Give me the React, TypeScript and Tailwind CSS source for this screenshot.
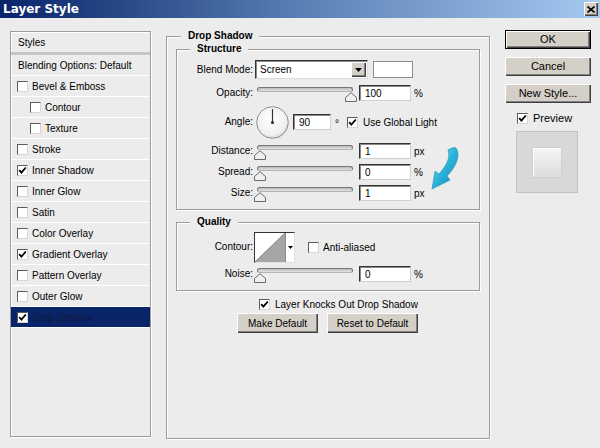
import React from "react";

const FONT = "font-['Liberation_Sans',Arial,sans-serif]";

function CheckBox({ checked }: { checked?: boolean }) {
  return (
    <span className="flex h-[11px] w-[11px] shrink-0 items-center justify-center border border-[#5a5a5a] border-r-[#d6d6d6] border-b-[#d6d6d6] bg-white">
      {checked ? (
        <svg width="9" height="9" viewBox="0 0 9 9">
          <path d="M1.2 4.2 L3.4 6.7 L7.8 1.5" fill="none" stroke="#000" strokeWidth="1.8" />
        </svg>
      ) : null}
    </span>
  );
}

function WinButton({
  children,
  isDefault,
  className = "",
}: {
  children: React.ReactNode;
  isDefault?: boolean;
  className?: string;
}) {
  return (
    <button
      type="button"
      className={`flex items-center justify-center bg-[#d4d0c8] text-black shadow-[inset_1px_1px_0_#ffffff,inset_-1px_-1px_0_#404040,inset_-2px_-2px_0_#808080] ${
        isDefault ? "border border-black" : ""
      } ${className}`}
    >
      {children}
    </button>
  );
}

function Slider({ thumb }: { thumb: number }) {
  return (
    <div className="relative h-[16px] w-[98px] shrink-0">
      <div className="ml-[1px] mt-[4px] h-[5px] w-[96px] rounded-full border border-[#777777] border-b-[#b4b4b4] bg-gradient-to-b from-[#b9b9b9] to-[#e4e4e4]" />
      <svg
        className="absolute top-[5px]"
        style={{ left: thumb - 6 }}
        width="12"
        height="10"
        viewBox="0 0 12 10"
      >
        <path d="M0.5 9.5 V5.5 L6 0.7 L11.5 5.5 V9.5 Z" fill="#efefef" stroke="#6a6a6a" />
      </svg>
    </div>
  );
}

function Field({ value, className = "" }: { value: string; className?: string }) {
  return (
    <div
      className={`flex h-[16px] shrink-0 items-center border border-[#333333] border-r-[#d0d0d0] border-b-[#d0d0d0] bg-white pl-[5px] text-[10px] text-black shadow-[inset_1px_1px_0_#8a8a8a] ${className}`}
    >
      {value}
    </div>
  );
}

function Label({ children }: { children: React.ReactNode }) {
  return <div className="w-[76px] shrink-0 text-right text-[10px] leading-[12px] text-black">{children}</div>;
}

function SliderRow({
  label,
  thumb,
  value,
  unit,
  className = "",
}: {
  label: string;
  thumb: number;
  value: string;
  unit: string;
  className?: string;
}) {
  return (
    <div className={`flex h-[16px] items-center ${className}`}>
      <Label>{label}</Label>
      <div className="ml-[3px]">
        <Slider thumb={thumb} />
      </div>
      <Field value={value} className="ml-[5px] w-[52px]" />
      <span className="ml-[3px] text-[10px] text-black">{unit}</span>
    </div>
  );
}

const styleItems: { label: string; checked?: boolean; indent?: boolean; active?: boolean }[] = [
  { label: "Bevel & Emboss" },
  { label: "Contour", indent: true },
  { label: "Texture", indent: true },
  { label: "Stroke" },
  { label: "Inner Shadow", checked: true },
  { label: "Inner Glow" },
  { label: "Satin" },
  { label: "Color Overlay" },
  { label: "Gradient Overlay", checked: true },
  { label: "Pattern Overlay" },
  { label: "Outer Glow" },
  { label: "Drop Shadow", checked: true, active: true },
];

export default function App() {
  return (
    <div className={`relative flex h-[448px] w-[600px] flex-col overflow-hidden bg-[#ececec] ${FONT}`}>
      {/* Title bar */}
      <div className="flex h-[18px] shrink-0 items-center justify-between bg-gradient-to-r from-[#0a246a] via-[#5a7fb4] to-[#a6caf0] pl-[3px]">
        <span className="font-['DejaVu_Sans',sans-serif] text-[12px] font-bold leading-[14px] text-white">Layer Style</span>
        <div className="mr-[2px] flex h-[14px] w-[14px] items-center justify-center bg-[#d4d0c8] shadow-[inset_1px_1px_0_#ffffff,inset_-1px_-1px_0_#404040,inset_-2px_-2px_0_#808080]">
          <svg width="8" height="7" viewBox="0 0 8 7">
            <path d="M0.5 0.5 L7.5 6.5 M7.5 0.5 L0.5 6.5" stroke="#000" strokeWidth="1.6" />
          </svg>
        </div>
      </div>

      {/* Body */}
      <div className="flex items-start pt-[12px]">
        {/* Left styles list */}
        <div className="ml-[10px] mt-[1px] flex h-[406px] w-[141px] shrink-0 flex-col border border-[#9c9c9c] shadow-[inset_1px_1px_0_#ffffff,1px_1px_0_#ffffff]">
          <div className="flex h-[20px] items-center pl-[7px] text-[10px] text-black">Styles</div>
          <div className="h-[3px] bg-[#c6c6c6]" />
          <div className="flex h-[21px] items-center border-b border-white pl-[7px] text-[10px] text-black">
            Blending Options: Default
          </div>
          {styleItems.map((it) => (
            <div
              key={it.label}
              className={`flex h-[21px] items-center gap-[4px] border-b border-white text-[10px] ${
                it.indent ? "pl-[19px]" : "pl-[6px]"
              } ${it.active ? "bg-[#0a246a] text-[#101a3c]" : "text-black"}`}
            >
              <CheckBox checked={it.checked} />
              <span>{it.label}</span>
            </div>
          ))}
        </div>

        {/* Middle: Drop Shadow */}
        <fieldset className="ml-[15px] h-[409px] w-[324px] shrink-0 border border-[#9c9c9c] shadow-[inset_1px_1px_0_#ffffff,1px_1px_0_#ffffff]">
          <legend className="ml-[14px] bg-[#ececec] px-[7px] text-[10px] font-bold leading-[12px] text-black">Drop Shadow</legend>

          {/* Structure */}
          <fieldset className="mx-[9px] mt-[1px] border border-[#9c9c9c] pb-[8px] shadow-[inset_1px_1px_0_#ffffff,1px_1px_0_#ffffff]">
            <legend className="ml-[13px] bg-[#ececec] px-[7px] text-[10px] font-bold leading-[12px] text-black">Structure</legend>

            <div className="mt-[5px] flex h-[19px] items-center">
              <Label>Blend Mode:</Label>
              <div className="ml-[2px] flex h-[19px] w-[113px] items-center border border-[#333333] border-r-[#dcdcdc] border-b-[#dcdcdc] bg-white shadow-[inset_1px_1px_0_#8a8a8a]">
                <span className="flex-1 pl-[4px] text-[10px] text-black">Screen</span>
                <div className="mr-[1px] flex h-[15px] w-[15px] items-center justify-center bg-[#d4d0c8] shadow-[inset_1px_1px_0_#ffffff,inset_-1px_-1px_0_#404040,inset_-2px_-2px_0_#808080]">
                  <svg width="7" height="4" viewBox="0 0 7 4">
                    <path d="M0 0 H7 L3.5 4 Z" fill="#000" />
                  </svg>
                </div>
              </div>
              <div className="ml-[5px] h-[17px] w-[40px] border border-[#8c8c8c] bg-white" />
            </div>

            <SliderRow label="Opacity:" thumb={95} value="100" unit="%" className="mt-[6px]" />

            <div className="mt-[4px] flex h-[34px] items-center">
              <Label>Angle:</Label>
              <svg className="ml-[3px] shrink-0" width="33" height="33" viewBox="0 0 33 33">
                <defs>
                  <radialGradient id="dialg" cx="45%" cy="40%" r="65%">
                    <stop offset="0" stopColor="#ffffff" />
                    <stop offset="0.75" stopColor="#f0f0f0" />
                    <stop offset="1" stopColor="#c8c8c8" />
                  </radialGradient>
                </defs>
                <circle cx="16.5" cy="16.5" r="15.8" fill="url(#dialg)" stroke="#8e8e8e" strokeWidth="1" />
                <line x1="16.5" y1="16.5" x2="16.5" y2="3" stroke="#333" strokeWidth="1.2" />
                <circle cx="16.5" cy="16.5" r="1.6" fill="#333" />
              </svg>
              <Field value="90" className="ml-[4px] w-[38px]" />
              <span className="ml-[4px] mt-[4px] text-[10px] leading-[10px] text-black">°</span>
              <div className="ml-[8px]">
                <CheckBox checked />
              </div>
              <span className="ml-[5px] text-[10px] text-black">Use Global Light</span>
            </div>

            <SliderRow label="Distance:" thumb={4} value="1" unit="px" className="mt-[4px]" />
            <SliderRow label="Spread:" thumb={4} value="0" unit="%" className="mt-[5px]" />
            <SliderRow label="Size:" thumb={4} value="1" unit="px" className="mt-[5px]" />
          </fieldset>

          {/* Quality */}
          <fieldset className="mx-[9px] mt-[6px] border border-[#9c9c9c] pb-[8px] shadow-[inset_1px_1px_0_#ffffff,1px_1px_0_#ffffff]">
            <legend className="ml-[13px] bg-[#ececec] px-[7px] text-[10px] font-bold leading-[12px] text-black">Quality</legend>

            <div className="mt-[3px] flex h-[32px] items-center">
              <Label>Contour:</Label>
              <div className="ml-[1px] flex h-[31px] w-[41px] border border-[#333333] border-r-[#e0e0e0] border-b-[#e0e0e0] bg-white">
                <svg width="30" height="29" viewBox="0 0 30 29" className="shrink-0">
                  <polygon points="0,29 30,0 30,29" fill="#a6a6a6" />
                  <line x1="0" y1="29" x2="30" y2="0" stroke="#6a6a6a" strokeWidth="0.8" />
                </svg>
                <div className="flex flex-1 items-center justify-center border-l border-[#8a8a8a] bg-white">
                  <svg width="5" height="3" viewBox="0 0 5 3">
                    <path d="M0 0 H5 L2.5 3 Z" fill="#000" />
                  </svg>
                </div>
              </div>
              <div className="ml-[13px]">
                <CheckBox />
              </div>
              <span className="ml-[4px] text-[10px] text-black">Anti-aliased</span>
            </div>

            <SliderRow label="Noise:" thumb={4} value="0" unit="%" className="mt-[3px]" />
          </fieldset>

          <div className="ml-[92px] mt-[7px] flex h-[12px] items-center">
            <CheckBox checked />
            <span className="ml-[5px] text-[10px] text-black">Layer Knocks Out Drop Shadow</span>
          </div>

          <div className="mt-[3px] flex gap-[9px] pl-[70px]">
            <WinButton className="h-[20px] w-[81px] text-[10px]">Make Default</WinButton>
            <WinButton className="h-[20px] w-[91px] text-[10px]">Reset to Default</WinButton>
          </div>
        </fieldset>

        {/* Right column */}
        <div className="ml-[15px] flex w-[86px] shrink-0 flex-col">
          <WinButton isDefault className="h-[19px] w-[86px] text-[11px]">OK</WinButton>
          <WinButton className="mt-[8px] h-[19px] w-[86px] text-[11px]">Cancel</WinButton>
          <WinButton className="mt-[8px] h-[19px] w-[86px] text-[11px]">New Style...</WinButton>
          <div className="mt-[9px] flex h-[12px] items-center pl-[12px]">
            <CheckBox checked />
            <span className="ml-[5px] text-[11px] text-black">Preview</span>
          </div>
          <div className="ml-[11px] mt-[7px] flex h-[62px] w-[62px] items-center justify-center border border-[#c2c2c2] bg-[#d8d8d8]">
            <div className="h-[31px] w-[30px] border border-[#cfcfcf] bg-gradient-to-b from-[#f6f6f6] to-[#dcdcdc] shadow-[inset_1px_1px_0_#ffffff]" />
          </div>
        </div>
      </div>

      {/* Decorative arrow */}
      <svg className="absolute left-[427px] top-[146px]" width="34" height="46" viewBox="0 0 34 46">
        <defs>
          <linearGradient id="arrg" x1="0" y1="0" x2="1" y2="1">
            <stop offset="0" stopColor="#8be0f4" />
            <stop offset="0.5" stopColor="#2bb3da" />
            <stop offset="1" stopColor="#0d86ad" />
          </linearGradient>
        </defs>
        <path
          d="M29 2 C34 9 29 21 20 30 L23 34 L5 43 L8 25 L12 28 C19 20 24 12 21 4 C24 2 27 1 29 2 Z"
          fill="url(#arrg)"
          stroke="#1a8db0"
          strokeWidth="0.6"
        />
      </svg>
    </div>
  );
}
